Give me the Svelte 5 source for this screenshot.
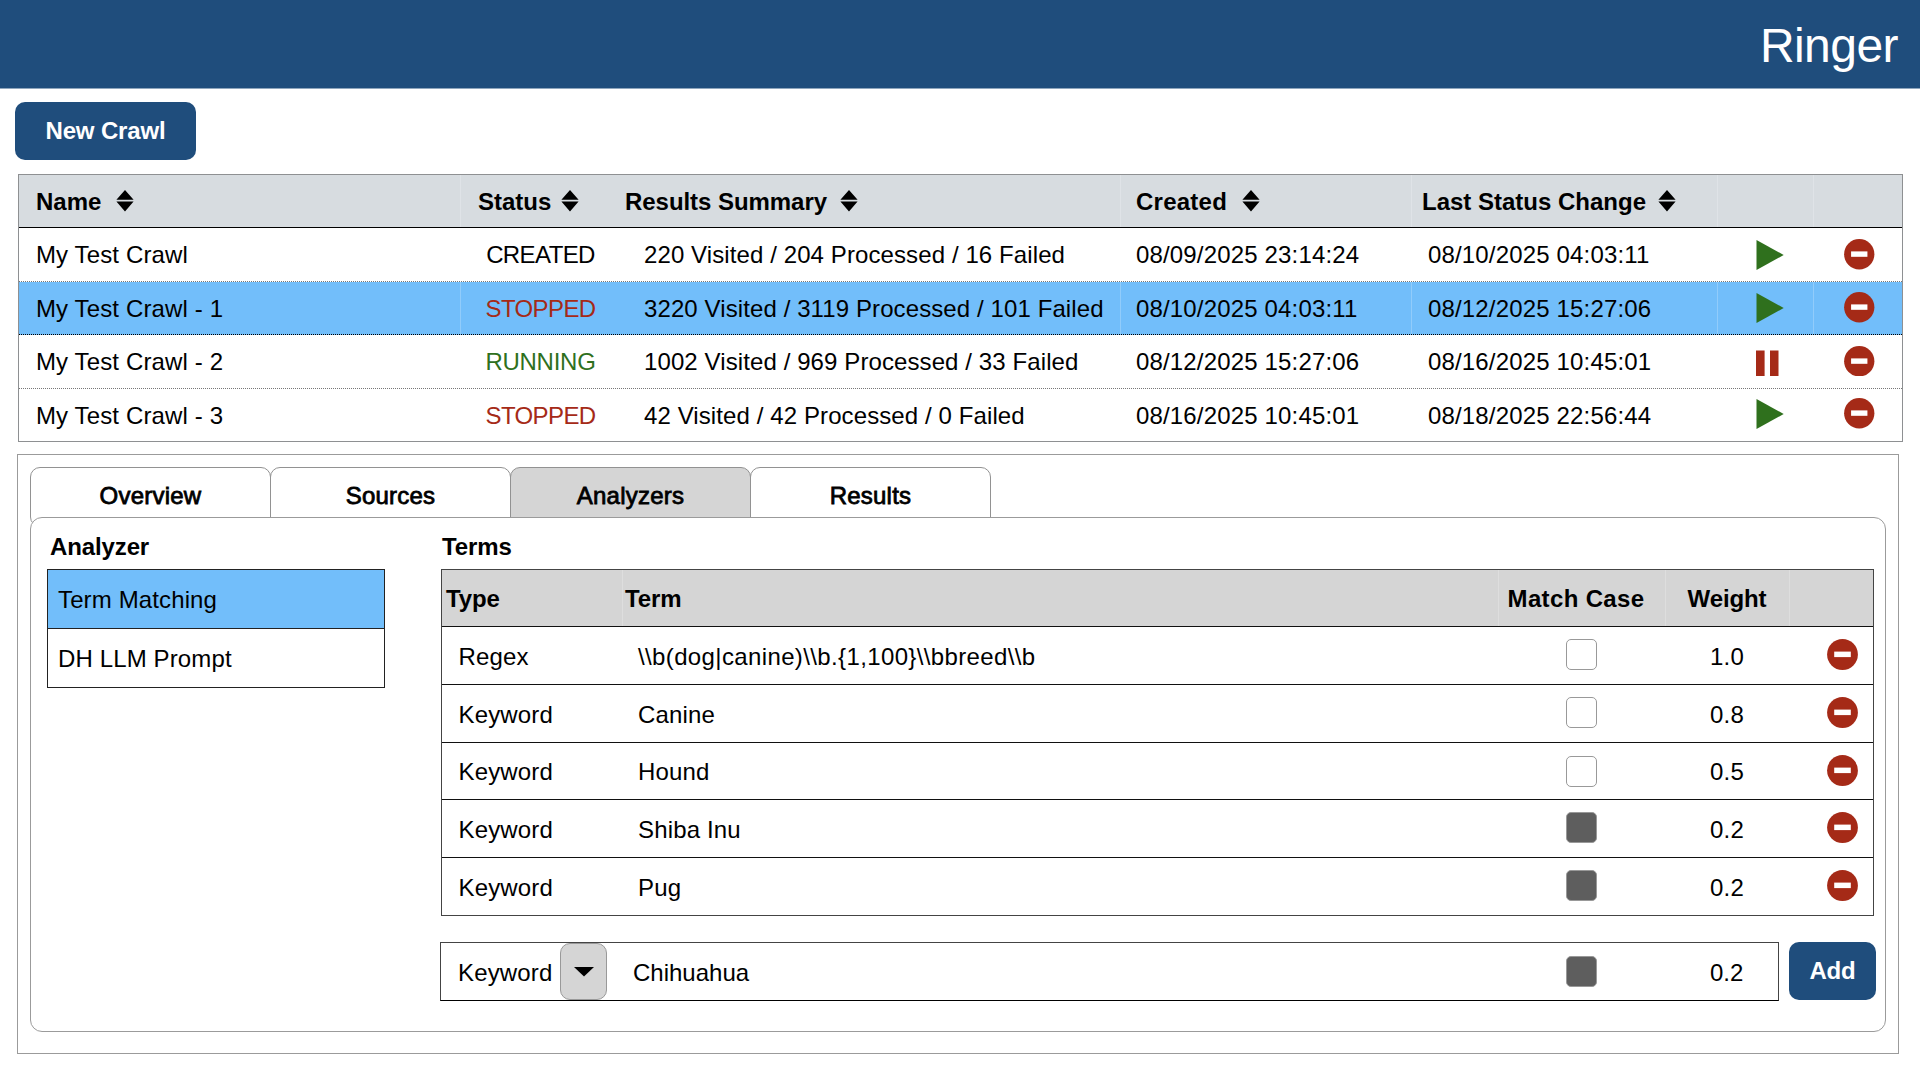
<script>
  const columns = [
    { label: 'Name', cls: 'name' },
    { label: 'Status', cls: 'status' },
    { label: 'Results Summary', cls: 'summary' },
    { label: 'Created', cls: 'created' },
    { label: 'Last Status Change', cls: 'changed' },
  ];

  let crawls = $state([
    { name: 'My Test Crawl', status: 'CREATED', summary: '220 Visited / 204 Processed / 16 Failed', created: '08/09/2025 23:14:24', changed: '08/10/2025 04:03:11' },
    { name: 'My Test Crawl - 1', status: 'STOPPED', summary: '3220 Visited / 3119 Processed / 101 Failed', created: '08/10/2025 04:03:11', changed: '08/12/2025 15:27:06' },
    { name: 'My Test Crawl - 2', status: 'RUNNING', summary: '1002 Visited / 969 Processed / 33 Failed', created: '08/12/2025 15:27:06', changed: '08/16/2025 10:45:01' },
    { name: 'My Test Crawl - 3', status: 'STOPPED', summary: '42 Visited / 42 Processed / 0 Failed', created: '08/16/2025 10:45:01', changed: '08/18/2025 22:56:44' },
  ]);
  let selected = $state(1);

  const tabs = ['Overview', 'Sources', 'Analyzers', 'Results'];
  let activeTab = $state('Analyzers');

  const analyzers = ['Term Matching', 'DH LLM Prompt'];
  let analyzer = $state('Term Matching');

  let terms = $state([
    { type: 'Regex', term: '\\\\b(dog|canine)\\\\b.{1,100}\\\\bbreed\\\\b', match: false, weight: '1.0' },
    { type: 'Keyword', term: 'Canine', match: false, weight: '0.8' },
    { type: 'Keyword', term: 'Hound', match: false, weight: '0.5' },
    { type: 'Keyword', term: 'Shiba Inu', match: true, weight: '0.2' },
    { type: 'Keyword', term: 'Pug', match: true, weight: '0.2' },
  ]);
  let draftMatch = $state(true);
</script>

{#snippet sortIcon()}
  <svg class="sort" viewBox="0 0 18 22" width="18" height="22" aria-hidden="true">
    <path d="M9 0 17.6 9.8H.4zM9 21.6.4 11.6h17.2z" />
  </svg>
{/snippet}

{#snippet removeIcon(size)}
  <svg viewBox="0 0 31 31" width={size} height={size} aria-hidden="true">
    <circle cx="15.5" cy="15.5" r="15.4" fill="#a52a17" />
    <rect x="7.2" y="12.6" width="16.6" height="5.5" fill="#fff" />
  </svg>
{/snippet}

<header class="top"><h1>Ringer</h1></header>

<main>
  <button class="primary new">New Crawl</button>

  <section class="crawls">
    <div class="row head">
      {#each columns as col}
        <div class="cell {col.cls}"><span>{col.label}</span>{@render sortIcon()}</div>
      {/each}
      <div class="cell"></div>
      <div class="cell"></div>
    </div>
    {#each crawls as crawl, i}
      <div class="row" class:selected={selected === i}>
        <div class="cell name">{crawl.name}</div>
        <div class="cell status {crawl.status.toLowerCase()}">{crawl.status}</div>
        <div class="cell summary">{crawl.summary}</div>
        <div class="cell created date">{crawl.created}</div>
        <div class="cell changed date">{crawl.changed}</div>
        <div class="cell action">
          {#if crawl.status === 'RUNNING'}
            <svg viewBox="0 0 28 30" width="28" height="30"><path d="M0 4.600h8.600v26H0zM14 4.600h8.500v26H14z" fill="#a52a17" /></svg>
          {:else}
            <svg viewBox="0 0 28 30" width="28" height="30"><path d="M.5 0 27.700 15 .5 30z" fill="#2f701d" /></svg>
          {/if}
        </div>
        <div class="cell remove">{@render removeIcon(30.5)}</div>
      </div>
    {/each}
  </section>

  <section class="detail">
    <nav class="tabs">
      {#each tabs as tab}
        <button class="tab" class:active={activeTab === tab} onclick={() => (activeTab = tab)}>{tab}</button>
      {/each}
    </nav>

    <div class="pane">
      <div class="analyzers">
        <h2>Analyzer</h2>
        <ul>
          {#each analyzers as item}
            <li class:selected={analyzer === item}>{item}</li>
          {/each}
        </ul>
      </div>

      <div class="terms">
        <h2>Terms</h2>
        <div class="table">
          <div class="trow thead">
            <div>Type</div>
            <div>Term</div>
            <div>Match Case</div>
            <div>Weight</div>
            <div></div>
          </div>
          {#each terms as t}
            <div class="trow">
              <div>{t.type}</div>
              <div class:regex={t.type === 'Regex'}>{t.term}</div>
              <div><span class="check" class:on={t.match}></span></div>
              <div>{t.weight}</div>
              <div>{@render removeIcon(31)}</div>
            </div>
          {/each}
        </div>

        <div class="add">
          <div class="form">
            <div class="kind">Keyword</div>
            <button class="drop" aria-label="Choose type">
              <svg viewBox="0 0 20 10" width="20" height="10"><path d="M0 0h20L10 9.500z" /></svg>
            </button>
            <div class="term">Chihuahua</div>
            <div class="match"><span class="check" class:on={draftMatch}></span></div>
            <div class="weight">0.2</div>
          </div>
          <button class="primary submit">Add</button>
        </div>
      </div>
    </div>
  </section>
</main>

<style>
  :global(body) {
    background: #fff;
    color: #000;
    font: 24px/27px 'Liberation Sans', Arial, sans-serif;
  }
  .top, main, main :global(*) { box-sizing: border-box; }
  h1, h2, ul { margin: 0; padding: 0; font: inherit; }
  button { margin: 0; padding: 0; border: 0; font: inherit; color: inherit; }
  svg { display: block; flex: none; }

  .top {
    display: flex;
    justify-content: flex-end;
    height: 89px;
    padding: 18px 22px 0 0;
    background: #1f4d7c;
    border-bottom: 1px solid #8fa6bd;
    color: #fff;
  }
  h1 { font-size: 48px; line-height: 56px; letter-spacing: -0.55px; }

  main { display: flex; flex-direction: column; align-items: flex-start; }

  .primary {
    background: #1f4d7c;
    color: #fff;
    font-weight: 700;
    border-radius: 10px;
  }
  .new {
    width: 181px;
    height: 58px;
    margin: 13px 0 0 15px;
    padding-bottom: 1px;
    letter-spacing: -0.15px;
  }

  .crawls {
    width: 1885px;
    margin: 14px 0 0 18px;
    border: 1px solid #8e9092;
  }
  .row {
    display: grid;
    grid-template-columns: 441px 150px 510px 291px 306px 96px 1fr;
    height: 54px;
    border-bottom: 1px dotted #777;
    letter-spacing: 0.13px;
  }
  .row:nth-child(odd) { height: 53px; }
  .row:last-child { height: 52px; border-bottom: 0; }
  .row.head {
    background: #d7dce0;
    border-bottom: 1px solid #000;
    font-weight: 700;
    letter-spacing: 0;
  }
  .row.selected { background: #72befa; border-bottom-color: #000; }
  .cell { display: flex; align-items: center; white-space: nowrap; }
  .head .cell + .cell:not(.summary), .selected .cell + .cell:not(.summary) { box-shadow: inset 1px 0 rgb(255 255 255 / 22%); }
  .name { padding-left: 17px; }
  .cell.status { justify-content: center; padding-left: 11px; letter-spacing: -0.6px; }
  .cell.running { letter-spacing: -0.25px; }
  .head .cell.status { justify-content: flex-start; padding-left: 18px; letter-spacing: 0; }
  .summary { padding-left: 34px; letter-spacing: 0.1px; }
  .head .summary { padding-left: 15px; letter-spacing: -0.05px; }
  .created { padding-left: 16px; }
  .head .created { letter-spacing: 0.25px; }
  .changed { padding-left: 17px; }
  .head .changed { padding-left: 11px; }
  .date { letter-spacing: 0.16px; }
  .sort { margin-left: 15px; }
  .status .sort { margin-left: 10px; }
  .summary .sort { margin-left: 13px; }
  .changed .sort { margin-left: 12px; }
  .stopped { color: #a52a17; }
  .running { color: #2f701d; }
  .action { padding-left: 39px; }
  .remove { padding-left: 31px; }
  .row:nth-child(n + 3) > .action, .row:nth-child(n + 3) > .remove { padding-bottom: 1px; }
  .row:last-child > .action, .row:last-child > .remove { padding-bottom: 3px; }

  .detail {
    width: 1882px;
    height: 600px;
    margin: 12px 0 0 17px;
    padding: 12px 0 0 12px;
    border: 1px solid #9b9b9b;
  }
  .tabs { display: flex; height: 50px; }
  .tab {
    width: 241px;
    height: 60px;
    margin-right: -1px;
    padding-bottom: 3px;
    background: #fff;
    border: 1px solid #929292;
    border-radius: 10px;
    letter-spacing: 0.22px;
    -webkit-text-stroke: 0.8px #000;
  }
  .tab.active { background: #d5d5d5; }

  .pane {
    position: relative;
    display: flex;
    width: 1856px;
    height: 515px;
    padding-left: 16px;
    background: #fff;
    border: 1px solid #9b9b9b;
    border-radius: 12px;
  }
  h2 { height: 51px; padding-top: 15px; font-weight: 700; letter-spacing: -0.12px; }
  .analyzers { width: 394px; }
  .analyzers h2 { padding-left: 3px; }
  .terms h2 { padding-left: 1px; }
  ul { width: 338px; list-style: none; border: 1px solid #222; }
  li {
    display: flex;
    align-items: center;
    height: 58px;
    padding-left: 10px;
    letter-spacing: 0.13px;
  }
  li:first-child { height: 59px; border-bottom: 1px solid #222; }
  li.selected { background: #72befa; }

  .table { width: 1433px; border: 1px solid #444; }
  .trow {
    display: grid;
    grid-template-columns: 180px 876px 167px 124px 1fr;
    height: 58px;
    border-bottom: 1px solid #111;
    letter-spacing: 0.15px;
  }
  .trow:nth-child(1), .trow:nth-child(4) { height: 57px; }
  .trow:last-child { height: 57px; border-bottom: 0; }
  .trow > div { display: flex; align-items: center; padding: 1px 0 0 16px; white-space: nowrap; }
  .trow > div:nth-child(1) { padding-left: 16.5px; }
  .trow > div:nth-child(3), .trow > div:nth-child(4) { justify-content: center; padding-left: 0; }
  .trow > div:nth-child(3) { padding: 0 0 3px; }
  .trow:nth-child(4) > div:nth-child(3) { padding-bottom: 0; }
  .trow > div:nth-child(5) { padding: 0 0 2px 38px; }
  .trow > div.regex { letter-spacing: 0.37px; }
  .trow.thead { background: #d5d5d5; font-weight: 700; letter-spacing: -0.1px; }
  .trow.thead > div { padding: 0 0 0 4px; }
  .trow.thead > div:nth-child(2) { padding-left: 3px; }
  .trow.thead > div:nth-child(3) { padding: 0 11px 0 0; letter-spacing: 0.35px; }
  .trow.thead > div:nth-child(n + 4) { padding-left: 0; }
  .thead > div + div { box-shadow: inset 1px 0 rgb(255 255 255 / 22%); }

  .check {
    width: 31px;
    height: 31px;
    background: #fff;
    border: 1px solid #999;
    border-radius: 5px;
  }
  .check.on { background: #5e5e5e; }

  .add { display: flex; gap: 10px; margin-top: 26px; }
  .form {
    display: grid;
    grid-template-columns: 120px 46px 890px 167px 1fr;
    align-items: center;
    width: 1339px;
    height: 59px;
    margin-left: -1px;
    border: 1px solid #444;
    border-bottom-color: #000;
  }
  .kind { padding: 1px 0 0 17px; letter-spacing: 0.15px; }
  .drop {
    display: flex;
    align-items: center;
    justify-content: center;
    height: 57px;
    margin-left: -1px;
    background: #d5d5d5;
    border: 1px solid #999;
    border-radius: 10px;
  }
  .term { padding: 1px 0 0 26px; }
  .match { display: flex; justify-content: center; padding: 0 0 1px 1px; }
  .weight { padding: 1px 0 0 46px; }
  .submit { width: 87px; height: 58px; letter-spacing: -0.2px; padding-bottom: 2px; }
</style>
